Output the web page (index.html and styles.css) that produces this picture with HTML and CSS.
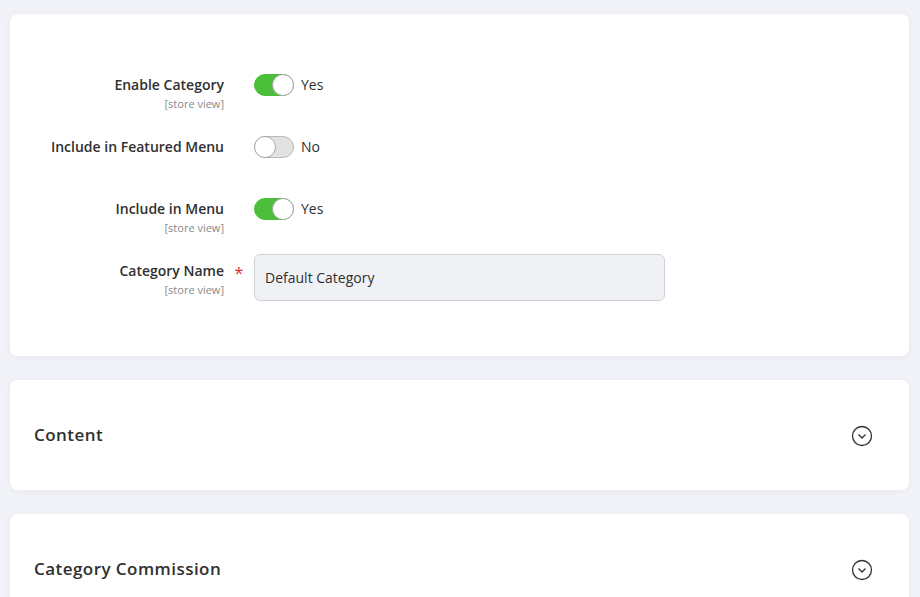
FILE: index.html
```html
<!DOCTYPE html>
<html lang="en">
<head>
    <title>Category</title>
    <link rel="stylesheet" href="styles.css">
</head>
<body>
    <div class="card general">
        <div class="field">
            <div class="label">
                <span class="label-title">Enable Category</span>
                <span class="label-note">[store view]</span>
            </div>
            <div class="control">
                <span class="switch on"><span class="knob"></span></span>
                <span class="switch-text">Yes</span>
            </div>
        </div>
        <div class="field">
            <div class="label">
                <span class="label-title">Include in Featured Menu</span>
            </div>
            <div class="control">
                <span class="switch"><span class="knob"></span></span>
                <span class="switch-text">No</span>
            </div>
        </div>
        <div class="field">
            <div class="label">
                <span class="label-title">Include in Menu</span>
                <span class="label-note">[store view]</span>
            </div>
            <div class="control">
                <span class="switch on"><span class="knob"></span></span>
                <span class="switch-text">Yes</span>
            </div>
        </div>
        <div class="field field-text">
            <div class="label">
                <span class="label-title">Category Name</span>
                <span class="label-note">[store view]</span>
            </div>
            <span class="required">*</span>
            <div class="control">
                <input class="input" type="text" value="Default Category">
            </div>
        </div>
    </div>

    <div class="card section">
        <span class="section-title">Content</span>
        <svg class="chevron" width="22" height="22" viewBox="0 0 22 22">
            <circle cx="11" cy="11" r="9.5" fill="none" stroke="#303030" stroke-width="1.3"/>
            <path d="M7.5 9.5 L11 13 L14.5 9.5" fill="none" stroke="#303030" stroke-width="1.3"/>
        </svg>
    </div>

    <div class="card section">
        <span class="section-title">Category Commission</span>
        <svg class="chevron" width="22" height="22" viewBox="0 0 22 22">
            <circle cx="11" cy="11" r="9.5" fill="none" stroke="#303030" stroke-width="1.3"/>
            <path d="M7.5 9.5 L11 13 L14.5 9.5" fill="none" stroke="#303030" stroke-width="1.3"/>
        </svg>
    </div>
</body>
</html>
```

FILE: styles.css
```css
body {
    margin: 0;
    background-color: #f1f3f8;
    font-family: "Open Sans", "Liberation Sans", sans-serif;
    color: #303030;
    padding: 14px 11px 0 10px;
}
.card {
    background-color: white;
    border-radius: 7px;
    box-shadow: 0 1px 6px rgba(40, 50, 80, 0.06);
    margin-bottom: 24px;
}
.general {
    padding: 60px 0 55px 0;
    height: 227px;
}
.field {
    display: flex;
    align-items: flex-start;
    margin-bottom: 22px;
    min-height: 40px;
}
.field-text {
    margin-top: -6px;
    margin-bottom: 0;
}
.label {
    width: 214px;
    display: flex;
    flex-direction: column;
    align-items: flex-end;
    text-align: right;
}
.field-text .label {
    padding-top: 6px;
}
.label-title {
    font-size: 14px;
    font-weight: 600;
    line-height: 22px;
}
.label-note {
    font-size: 11px;
    color: #8a8a8a;
    line-height: 14px;
    margin-top: 1px;
}
.required {
    color: #e22626;
    font-size: 16px;
    width: 30px;
    text-align: center;
    padding-top: 8px;
    line-height: 22px;
}
.control {
    display: flex;
    align-items: center;
    margin-left: 30px;
}
.field-text .control {
    margin-left: 0;
}
.switch {
    position: relative;
    width: 40px;
    height: 22px;
    border-radius: 11px;
    background-color: #e2e2e2;
    box-sizing: border-box;
    border: 1px solid #b9b9b9;
}
.switch.on {
    background-color: #4cbf3a;
    border-color: #4cbf3a;
}
.knob {
    position: absolute;
    top: -1px;
    left: -1px;
    width: 22px;
    height: 22px;
    border-radius: 50%;
    background-color: white;
    border: 1px solid #a9a9a9;
    box-sizing: border-box;
}
.switch.on .knob {
    left: auto;
    right: -1px;
}
.switch-text {
    font-size: 14px;
    margin-left: 7px;
    line-height: 22px;
}
.input {
    width: 411px;
    height: 47px;
    box-sizing: border-box;
    border: 1px solid #d2d2d6;
    border-radius: 6px;
    background-color: #f0f1f5;
    padding: 0 10px;
    font-family: "Open Sans", "Liberation Sans", sans-serif;
    font-size: 14px;
    color: #303030;
}
.section {
    height: 110px;
    display: flex;
    align-items: center;
    justify-content: space-between;
    padding: 0 36px 0 24px;
}
.section-title {
    font-size: 17px;
    font-weight: 600;
    letter-spacing: 0.45px;
    margin-top: -2px;
}
.chevron {
    margin-top: 1px;
}
```
